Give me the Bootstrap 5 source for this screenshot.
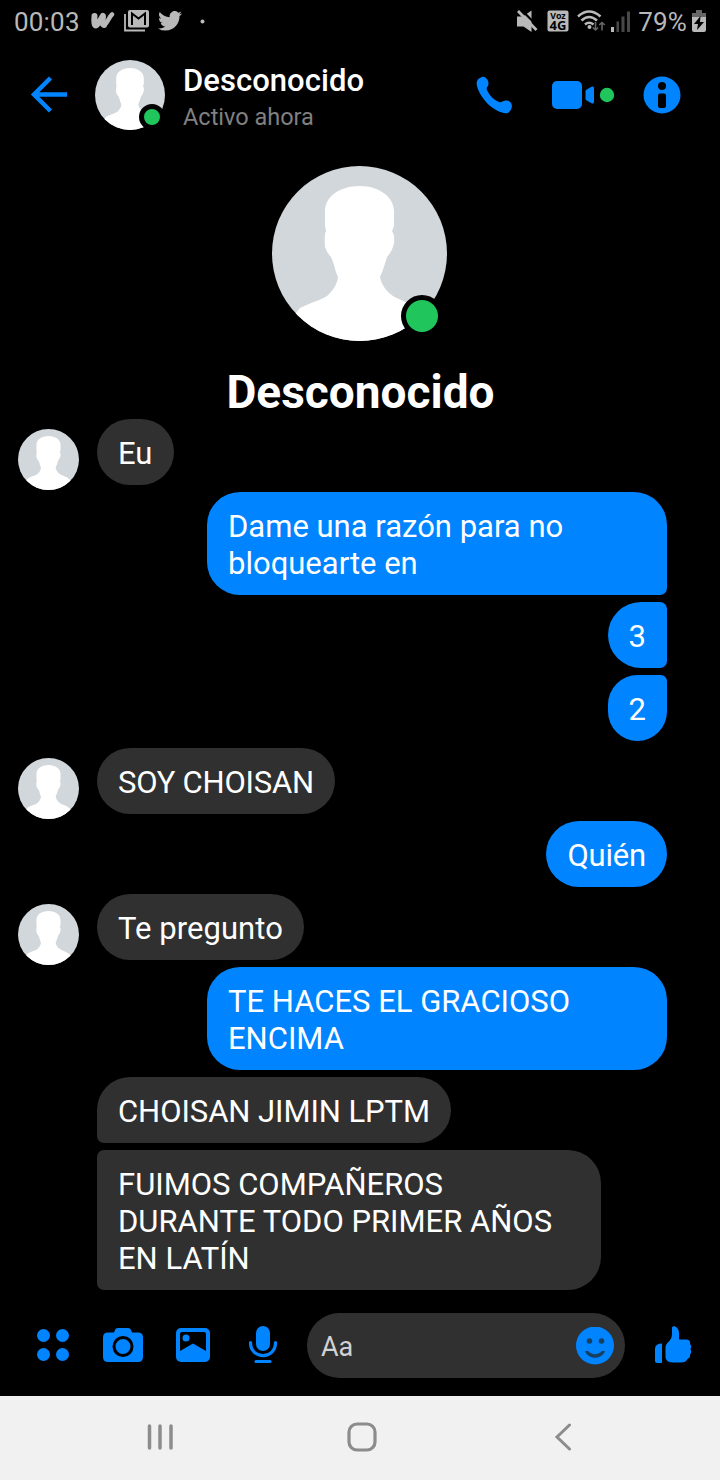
<!DOCTYPE html>
<html lang="es">
<head>
<meta charset="utf-8">
<meta name="viewport" content="width=device-width, initial-scale=1">
<title>Desconocido</title>
<link href="https://cdn.jsdelivr.net/npm/bootstrap@5.3.0/dist/css/bootstrap.min.css" rel="stylesheet">
<style>
  body { background: #000; color: #fff; font-family: Roboto, "Liberation Sans", sans-serif; width: 720px; height: 1480px; overflow: hidden; }
  svg { display: block; flex: none; }
  .statusbar { height: 44px; padding: 0 14px 2px 14px; color: #b9b9b9; font-size: 26px; line-height: 42px; }
  .clock { padding-top: 2px; letter-spacing: .2px; }
  .topbar { height: 104px; padding: 16px 38px 18px 30px; }
  .avatar { position: relative; flex: none; }
  .presence { position: absolute; background: #20c55c; border: solid #000; border-radius: 50%; box-sizing: content-box; }
  .presence-sm { width: 16px; height: 16px; border-width: 5px; left: 44px; top: 44px; }
  .presence-lg { width: 32px; height: 32px; border-width: 5px; left: 129px; top: 129px; }
  .who { font-size: 31px; font-weight: 500; line-height: 36px; margin-top: 3px; letter-spacing: .05px; }
  .seen { font-size: 23.5px; line-height: 28px; color: #808080; margin-top: 4px; }
  .hero { padding: 18px 2px 0 0; height: 271px; }
  .hero-name { font-size: 46px; font-weight: 700; line-height: 54px; margin: 24px 0 0 3px; }
  .thread { gap: 7px; padding: 0 53px 0 18px; height: 871px; }
  .face { margin: 10px 18px -5px 0; }
  .bubble { font-size: 31px; line-height: 37px; padding: 16px 21px 13px; border-radius: 33px; color: #fff; }
  .them { background: #303030; }
  .me { background: #0084ff; align-self: flex-end; }
  .indent { margin-left: 79px; align-self: flex-start; }
  .wide-me { width: 460px; }
  .wide-them { width: 504px; }
  .snug { letter-spacing: -.2px; }
  .roomy { letter-spacing: .05px; }
  .sq-tr { border-top-right-radius: 7px; }
  .sq-br { border-bottom-right-radius: 7px; }
  .sq-tl { border-top-left-radius: 7px; }
  .sq-bl { border-bottom-left-radius: 7px; }
  .composer { height: 106px; padding: 22px 28px 19px 36px; }
  .field { width: 318px; height: 65px; background: #303030; border-radius: 33px; padding: 0 11px 0 14px; color: #d2d2d2; font-size: 27px; margin: 2px 0 0 29px; }
  .field span { padding-top: 3px; }
  .sysnav { height: 84px; background: #f1f1f1; padding: 0 148px 3px 147px; }
  .lte { font-family: "Noto Sans", sans-serif; font-weight: 700; fill: #000; text-anchor: middle; }
</style>
</head>
<body>
<svg width="0" height="0" class="position-absolute">
  <symbol id="person" viewBox="0 0 175 175">
    <clipPath id="disc"><circle cx="87.500" cy="87.500" r="87.500"/></clipPath>
    <g clip-path="url(#disc)">
      <path fill="#d2d7db" d="M0 0h175v175H0z"/>
      <path fill="#fff" d="M88 20C67 20 53 31 53 45V60L54 65Q52 69 53 81Q55 87 59 91C63 100 63 105 66 111C65.500 118 60 126 55 130C49 134 40 136 28 142L20 152V175H155V152L145 142C139 137 127 134 121 130C114 125 109 118 108 111C111 104 113 98 115 91Q121 84 122 77Q123 69 120 65L122 60V45C122 31 107 20 88 20Z"/>
    </g>
  </symbol>
</svg>

<div class="statusbar d-flex align-items-center">
  <span class="clock">00:03</span>
  <svg style="margin-left:11px" width="24" height="20" viewBox="0 0 24 20" fill="none" stroke="#b9b9b9" stroke-linecap="round" stroke-linejoin="round"><path stroke-width="6" d="M3.500 5C3 11 3.500 14.500 5 14.500C7.500 13 10 8 12 5C11.500 10 11.500 14 13 14"/><path stroke-width="4.500" d="M13 14C16 13 18 6 21 3.500"/></svg>
  <svg style="margin-left:9px" width="25" height="22" viewBox="0 0 25 22"><path d="M1 4V20.500H21" fill="none" stroke="#b9b9b9" stroke-width="1.800"/><rect x="4" y="0" width="21" height="17.500" rx="2" fill="#b9b9b9"/><path d="M8 15V3.500L14.500 8.500 21 3.500V15" fill="none" stroke="#000" stroke-width="2"/></svg>
  <svg style="margin-left:9px" width="24" height="20" viewBox="0 0 24 20"><path fill="#b9b9b9" d="M24 2.400a10 10 0 0 1-2.800.8A5 5 0 0 0 23.300.500a10 10 0 0 1-3.100 1.200A4.900 4.900 0 0 0 11.800 6.200 14 14 0 0 1 1.700 1 4.900 4.900 0 0 0 3.200 7.600 5 5 0 0 1 1 7a4.900 4.900 0 0 0 3.900 4.900 5 5 0 0 1-2.200.1 4.900 4.900 0 0 0 4.600 3.400A10 10 0 0 1 0 17.400 14 14 0 0 0 7.500 19.600C16.600 19.600 21.800 12 21.500 5A10 10 0 0 0 24 2.400Z"/></svg>
  <svg style="margin-left:18px" width="5" height="5" viewBox="0 0 5 5"><circle cx="2.500" cy="2.500" r="2" fill="#b9b9b9"/></svg>
  <svg class="ms-auto" width="21" height="23" viewBox="0 0 21 23"><path fill="#b9b9b9" d="M0 6.500H6L14.500 .5V22L6.500 16.500H0Z"/><path stroke="#000" stroke-width="2.200" d="M3 -1.500L22 17.500"/><path stroke="#b9b9b9" stroke-width="2.800" d="M1 1L19.500 20"/></svg>
  <svg style="margin-left:9px" width="22" height="22" viewBox="0 0 22 22"><rect x=".5" y=".5" width="21" height="21" rx="2" fill="#b9b9b9"/><text class="lte" x="11" y="8.500" font-size="8.800">Voz</text><text class="lte" x="11" y="19.500" font-size="13">4G</text></svg>
  <svg style="margin-left:8px" width="29" height="22" viewBox="0 0 29 22" fill="none" stroke="#b9b9b9"><path stroke-width="2.600" d="M1 6.500Q12 -3.500 23.500 6.500M4.500 10.500Q12 3.500 20 10.500M8 14.500Q12 11 16.500 14.500"/><circle cx="12.500" cy="17" r="2" fill="#b9b9b9" stroke="none"/><path stroke="#666" stroke-width="1.600" d="M18.500 12V20M15.800 17.500L18.500 20 21.200 17.500M25 20.500V12.500M22.200 15L25 12.500 27.800 15"/></svg>
  <svg style="margin-left:5px" width="19" height="21" viewBox="0 0 19 21"><path fill="#b9b9b9" d="M0 16h3v5H0z"/><path fill="#484848" d="M5.500 10.500h2.500V21H5.500zM10.500 5.500h3V21h-3zM16 .5h3V21h-3z"/></svg>
  <span class="clock" style="margin-left:8px">79%</span>
  <svg style="margin-left:5px" width="14" height="22" viewBox="0 0 14 22"><path fill="#666" d="M4 0h6v3h4v5H0V3h4z"/><path fill="#b9b9b9" d="M0 7h14v13q0 2-2 2H2q-2 0-2-2z"/><path fill="#000" d="M8.500 6L2 14h4l-1 6 7-8H8z"/></svg>
</div>

<nav class="topbar d-flex align-items-center">
  <svg width="38" height="38" viewBox="0 0 38 38" fill="none" stroke="#0084ff" stroke-width="4.500"><path d="M37 18.500H4M20.500 2L4 18.500 20.500 35"/></svg>
  <div class="avatar" style="margin-left:27px">
    <svg width="70" height="70"><use href="#person"/></svg>
    <span class="presence presence-sm"></span>
  </div>
  <div style="margin-left:18px">
    <div class="who">Desconocido</div>
    <div class="seen">Activo ahora</div>
  </div>
  <svg class="ms-auto" width="38" height="38" viewBox="0 0 38 38"><path fill="#0084ff" d="M6 1C9 0 13 4 12.500 8C12.200 11 10 11 11 14C13 19 18 24 23 26C25.500 27 27 24.500 30 24.500C34 24.500 37 28 35.500 32C34 37 31 38 26 36.500C14 33 3 20 .8 9C0 5 2.500 2 6 1Z"/></svg>
  <svg style="margin-left:38px" width="64" height="30" viewBox="0 0 64 30"><rect y="1" width="30" height="28" rx="5" fill="#0084ff"/><path fill="#0084ff" d="M33.500 11Q34 9.500 35.500 9L40 6.500Q42 6 42 8V22Q42 24 40 23.500L35.500 21Q33.500 20 33.500 19Z"/><circle cx="55" cy="15" r="7.200" fill="#20c55c"/></svg>
  <svg style="margin-left:27px" width="39" height="38" viewBox="0 0 39 38"><circle cx="19" cy="19" r="18.500" fill="#0084ff"/><circle cx="19" cy="10" r="4" fill="#000"/><rect x="15" y="17.500" width="8" height="14.500" rx="2" fill="#000"/></svg>
</nav>

<header class="hero d-flex flex-column align-items-center">
  <div class="avatar">
    <svg width="175" height="175"><use href="#person"/></svg>
    <span class="presence presence-lg"></span>
  </div>
  <h1 class="hero-name">Desconocido</h1>
</header>

<main class="thread d-flex flex-column">
  <div class="d-flex align-items-start">
    <svg class="face" width="61" height="61"><use href="#person"/></svg>
    <div class="bubble them" style="width:77px">Eu</div>
  </div>
  <div class="bubble me wide-me sq-br">Dame una razón para no<br>bloquearte en</div>
  <div class="bubble me sq-tr sq-br">3</div>
  <div class="bubble me sq-tr">2</div>
  <div class="d-flex align-items-start">
    <svg class="face" width="61" height="61"><use href="#person"/></svg>
    <div class="bubble them snug">SOY CHOISAN</div>
  </div>
  <div class="bubble me snug">Quién</div>
  <div class="d-flex align-items-start">
    <svg class="face" width="61" height="61"><use href="#person"/></svg>
    <div class="bubble them roomy">Te pregunto</div>
  </div>
  <div class="bubble me wide-me">TE HACES EL GRACIOSO<br>ENCIMA</div>
  <div class="bubble them indent sq-bl" style="letter-spacing:-.06px">CHOISAN JIMIN LPTM</div>
  <div class="bubble them indent wide-them sq-tl sq-bl">FUIMOS COMPAÑEROS<br>DURANTE TODO PRIMER AÑOS<br>EN LATÍN</div>
</main>

<footer class="composer d-flex align-items-center">
  <svg width="34" height="34" viewBox="0 0 34 34" fill="#0084ff"><circle cx="7.500" cy="7.500" r="6.500"/><circle cx="26.500" cy="7.500" r="6.500"/><circle cx="7.500" cy="26.500" r="6.500"/><circle cx="26.500" cy="26.500" r="6.500"/></svg>
  <svg style="margin-left:33px" width="40" height="34" viewBox="0 0 40 34"><path fill="#0084ff" d="M5 4.500H11L12 2Q12.500 0 15 0H25Q27.500 0 28 2L29 4.500H35Q40 4.500 40 9.500V29Q40 34 35 34H5Q0 34 0 29V9.500Q0 4.500 5 4.500Z"/><circle cx="20" cy="18.500" r="9" fill="#0084ff" stroke="#000" stroke-width="3"/></svg>
  <svg style="margin-left:33px" width="34" height="34" viewBox="0 0 34 34"><rect width="34" height="34" rx="5" fill="#0084ff"/><path fill="#000" d="M4 6Q4 4 6 4H28Q30 4 30 6V23L17 15.500 4 23Z"/><circle cx="10" cy="10" r="3.500" fill="#0084ff"/></svg>
  <svg style="margin-left:38px" width="30" height="38" viewBox="0 0 30 38"><rect x="8" y="0" width="14" height="25" rx="7" fill="#0084ff"/><path d="M2.500 16.500C2.500 34 27.500 34 27.500 16.500M8 35.500H22" fill="none" stroke="#0084ff" stroke-width="3.200" stroke-linecap="round"/></svg>
  <div class="field d-flex align-items-center justify-content-between">
    <span>Aa</span>
    <svg width="38" height="38" viewBox="0 0 38 38"><circle cx="19" cy="18.500" r="19" fill="#0084ff"/><g fill="#17405f"><circle cx="13.500" cy="14" r="2.800"/><circle cx="25.500" cy="14" r="2.800"/><path d="M9 24H29C26 33 12 33 9 24Z"/><path fill="#0084ff" d="M11.500 23.500Q19 31 26.500 23.500V22H11.500Z"/></g></svg>
  </div>
  <svg class="ms-auto" width="37" height="39" viewBox="0 0 37 39" fill="#0084ff"><path d="M7 18.500V38H2Q0 38 0 36V24Q0 18.500 7 18.500Z"/><path d="M17 3C17 -.5 24 1 24 8V14.500H31Q36 15 35 19Q37 21 35.500 24Q37 27 35 30Q35.500 33 32.500 34Q31 37.500 26 37.500H19Q10.500 37.500 10.500 32V23Q10.500 19 14 16.500Q17.500 13 17 8Z"/></svg>
</footer>

<div class="sysnav d-flex align-items-center">
  <svg width="26" height="28" viewBox="0 0 26 28" stroke="#8c8c8c" stroke-width="3.500" stroke-linecap="round"><path d="M2.500 3V25M13 3V25M24 3V25"/></svg>
  <svg style="margin-left:173.500px" width="30" height="30" viewBox="0 0 30 30" fill="none" stroke="#8c8c8c" stroke-width="3.200"><rect x="2" y="2" width="26" height="26" rx="8"/></svg>
  <svg class="ms-auto" width="18" height="28" viewBox="0 0 18 28" fill="none" stroke="#8c8c8c" stroke-width="3" stroke-linecap="round"><path d="M15.500 2L3 14 15.500 26"/></svg>
</div>
<script src="https://cdn.jsdelivr.net/npm/bootstrap@5.3.0/dist/js/bootstrap.bundle.min.js"></script>
</body>
</html>
